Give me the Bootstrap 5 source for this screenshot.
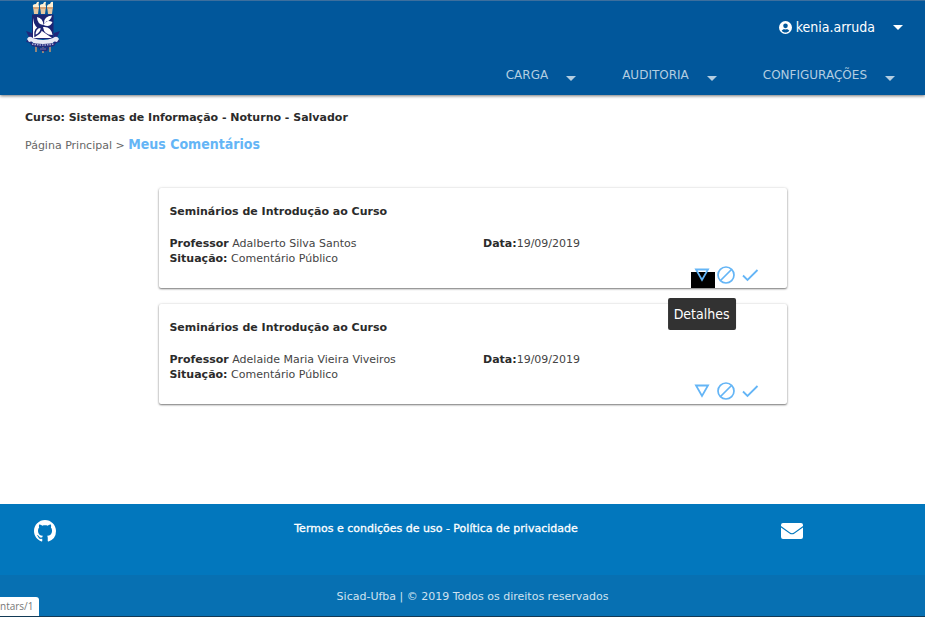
<!DOCTYPE html>
<html lang="pt-BR">
<head>
<meta charset="utf-8">
<meta name="viewport" content="width=device-width, initial-scale=1">
<title>Meus Comentários</title>
<link href="https://cdn.jsdelivr.net/npm/bootstrap@5.3.0/dist/css/bootstrap.min.css" rel="stylesheet">
<style>
body { font-family: "DejaVu Sans", sans-serif; font-size: 11px; line-height: 15px; color: #444; background: #fff; }
strong, h1, h2 { color: #2b2b2b; }
a { text-decoration: none; }
button { border: 0; background: none; padding: 0; }
.site-header { background: #01579b; border-top: 1px solid #3d6f9e; box-shadow: 0 1px 3px rgba(0,0,0,.55); }
.crest { width: 36px; height: 52px; margin-left: 25px; }
.user-menu { margin-right: 22px; font-family: "DejaVu Sans Condensed", "DejaVu Sans", sans-serif; font-size: 14px; line-height: 20px; color: #fff; }
.user-menu svg { margin-right: 4px; }
.main-menu { gap: 46px; padding: 13px 30px 11px 0; }
.main-menu button { font-size: 12px; line-height: 18px; color: #b3cde1; }
.menu-arrow { margin-left: 18px; border: 5px solid transparent; border-top-color: currentColor; border-bottom: 0; }
.main-menu .menu-arrow { margin-top: 6px; }
.page-body { padding: 13px 4px 32px 25px; }
.course-name { font-size: 11px; line-height: 20px; font-weight: 700; margin-bottom: 6px; }
.trail { line-height: 20px; margin-bottom: 32px; color: #666; }
.trail a { color: #666; }
.trail .here { font-family: "DejaVu Sans Condensed", "DejaVu Sans", sans-serif; font-size: 14px; font-weight: 700; color: #64b5f6; }
.comments { width: 70%; gap: 16px; }
.comment { padding: 14px 0 4px; border-radius: 2px; background: #fff; box-shadow: 0 1px 2px rgba(0,0,0,.5), 0 0 3px rgba(0,0,0,.12); }
.comment .row { --bs-gutter-x: 20px; margin: 0; }
.comment h2 { font-size: 11px; line-height: 20px; font-weight: 700; margin: 0 10px 14px; }
.actions { padding-right: 25px; }
.actions button { width: 24px; height: 18px; color: #64b5f6; }
.actions svg { position: relative; display: block; margin: 0 auto; }
.hover-block { position: absolute; left: 1px; top: 6px; width: 24px; height: 16px; background: #000; }
.tip { position: absolute; z-index: 2; top: 32px; left: 50%; transform: translateX(-50%); padding: 6px; border-radius: 2px; background: #323232; color: #fff; font-family: "DejaVu Sans Condensed", "DejaVu Sans", sans-serif; font-size: 14px; line-height: 20px; }
.site-footer { background: #0277bd; color: #fff; border-bottom: 1px solid #123a56; }
.footer-links { padding: 16px 122px 33px 34px; }
.footer-links a { color: #fff; }
.terms { padding-left: 35px; line-height: 18px; -webkit-text-stroke: .3px #fff; }
.legal { background: #0770b2; padding: 12px 0 9px 20px; line-height: 20px; color: #cfe2f0; }
.link-status { position: absolute; left: 0; bottom: 0; padding: 0 5px 0 0; line-height: 19px; background: #fff; color: #777; border-top-right-radius: 3px; font-family: "Open Sans", sans-serif; font-size: 10px; }
</style>
</head>
<body class="d-flex flex-column min-vh-100">
<header class="site-header position-relative">
  <div class="d-flex justify-content-between align-items-center">
    <a href="#" aria-label="UFBA">
      <svg class="crest d-block" viewBox="0 0 36 52">
        <path d="M11 44V51M18 44V52M25 44V51" stroke="#a58b78" stroke-width="1.800"/>
        <g fill="#e5c6a0"><path d="M8 5h6l-1 8H9zM15 5h6l-1 8h-4zM22 5h6l-1 8h-4z"/></g>
        <g fill="#fff0d3"><path d="M8 6Q7 3 11 3Q12 0 14 1Q13 3 14 6zM15 6Q14 3 18 3Q19 0 21 1Q20 3 21 6zM22 6Q22 3 25 3Q26 0 28 1Q28 3 28 6z"/></g>
        <path d="M8 7h6M15 7h6M22 7h6" stroke="#d39a6c" stroke-width="1.500"/>
        <path d="M1 30L7 32V42L1 41L4 36ZM35 30L29 32V42L35 41L32 36Z" fill="#20277b"/>
        <path d="M7 13.500H28.500V38H7Z" fill="#1d2472"/>
        <path d="M12 16Q18 17 18.500 24Q12 23 12 16ZM27.500 21Q21 18 18.500 24Q25 27 27.500 21ZM8 17Q9 27 17 30L27 37H8ZM19 22Q19 15 27 14.500Q26 20 19 22ZM18 26Q26 25 27.500 34Q19 34 18 26Z" fill="#fff"/>
        <path d="M10 35Q9 27 16 26Q18 31 10 35Z" fill="#fff" stroke="#1d2472" stroke-width="1.500"/>
        <path d="M2 38Q4 34 8 37Q18 41 28 37Q32 34 34 38L32 41Q28 39 27 44Q18 47 9 44Q8 39 4 41Z" fill="#e8e9f5"/>
        <path d="M4 41Q18 45 32 41L29 45Q18 48 7 45Z" fill="#252b7b"/>
        <path d="M7 43Q18 45 29 43" fill="none" stroke="#a9acd6" stroke-width="1.500" stroke-dasharray="1.500 1"/>
        <path d="M13 46Q18 48 24 46L22 50Q18 51 15 49Z" fill="#252b7b"/>
        <path d="M15.500 48h6" stroke="#bfc1dd" stroke-dasharray="1 1"/>
      </svg>
    </a>
    <button type="button" class="user-menu d-flex align-items-center">
      <svg width="13" height="13" viewBox="0 0 496 496" fill="currentColor" aria-hidden="true"><path fill-rule="evenodd" d="M248 0a248 248 0 1 0 0 496a248 248 0 1 0 0-496zm0 96a88 88 0 1 1 0 176a88 88 0 1 1 0-176zm0 344c-59 0-111-27-146-68c19-35 56-60 99-60c10 0 21 8 47 8s37-8 47-8c43 0 80 25 99 60c-35 41-87 68-146 68z"/></svg>
      <span>kenia.arruda</span><span class="menu-arrow"></span>
    </button>
  </div>
  <nav class="main-menu d-flex justify-content-end">
    <button type="button" class="d-flex align-items-center">CARGA<span class="menu-arrow"></span></button>
    <button type="button" class="d-flex align-items-center">AUDITORIA<span class="menu-arrow"></span></button>
    <button type="button" class="d-flex align-items-center">CONFIGURAÇÕES<span class="menu-arrow"></span></button>
  </nav>
</header>

<main class="page-body flex-grow-1">
  <h1 class="course-name">Curso: Sistemas de Informação - Noturno - Salvador</h1>
  <nav class="trail"><a href="#">Página Principal</a> &gt; <a href="#" class="here">Meus Comentários</a></nav>
  <div class="comments d-flex flex-column mx-auto">
    <article class="comment">
      <h2>Seminários de Introdução ao Curso</h2>
      <div class="row">
        <div class="col-6"><strong>Professor</strong> Adalberto Silva Santos<br><strong>Situação:</strong> Comentário Público</div>
        <div class="col-6"><strong>Data:</strong>19/09/2019</div>
      </div>
      <div class="actions d-flex justify-content-end">
        <button type="button" class="position-relative" aria-label="Detalhes">
          <span class="hover-block"></span>
          <svg width="18" height="18" viewBox="0 0 18 18" fill="none" stroke="currentColor" stroke-width="1.800"><path d="M3 3.500H15L9 14Z"/></svg>
          <span class="tip" role="tooltip">Detalhes</span>
        </button>
        <button type="button" aria-label="Bloquear"><svg width="18" height="18" viewBox="0 0 18 18" fill="none" stroke="currentColor" stroke-width="1.700"><circle cx="9" cy="9" r="8"/><path d="M3.500 14.500L14.500 3.500"/></svg></button>
        <button type="button" aria-label="Aprovar"><svg width="18" height="18" viewBox="0 0 18 18" fill="none" stroke="currentColor" stroke-width="1.800"><path d="M2 9.500L6.500 14L16.500 4"/></svg></button>
      </div>
    </article>
    <article class="comment">
      <h2>Seminários de Introdução ao Curso</h2>
      <div class="row">
        <div class="col-6"><strong>Professor</strong> Adelaide Maria Vieira Viveiros<br><strong>Situação:</strong> Comentário Público</div>
        <div class="col-6"><strong>Data:</strong>19/09/2019</div>
      </div>
      <div class="actions d-flex justify-content-end">
        <button type="button" aria-label="Detalhes"><svg width="18" height="18" viewBox="0 0 18 18" fill="none" stroke="currentColor" stroke-width="1.800"><path d="M3 3.500H15L9 14Z"/></svg></button>
        <button type="button" aria-label="Bloquear"><svg width="18" height="18" viewBox="0 0 18 18" fill="none" stroke="currentColor" stroke-width="1.700"><circle cx="9" cy="9" r="8"/><path d="M3.500 14.500L14.500 3.500"/></svg></button>
        <button type="button" aria-label="Aprovar"><svg width="18" height="18" viewBox="0 0 18 18" fill="none" stroke="currentColor" stroke-width="1.800"><path d="M2 9.500L6.500 14L16.500 4"/></svg></button>
      </div>
    </article>
  </div>
</main>

<footer class="site-footer position-relative">
  <div class="footer-links d-flex justify-content-between align-items-start">
    <a href="#" aria-label="GitHub"><svg class="d-block" width="22" height="22" viewBox="0 0 16 16" fill="currentColor"><path d="M8 0C3.580 0 0 3.580 0 8c0 3.540 2.290 6.530 5.470 7.590.4.070.55-.17.55-.38 0-.19-.01-.82-.01-1.490-2.010.37-2.530-.49-2.690-.94-.09-.23-.48-.94-.82-1.130-.28-.15-.68-.52-.01-.53.63-.01 1.080.58 1.230.82.72 1.210 1.870.87 2.330.66.07-.52.28-.87.51-1.070-1.780-.2-3.640-.89-3.640-3.950 0-.87.31-1.590.82-2.150-.08-.2-.36-1.020.08-2.120 0 0 .67-.21 2.200.82.64-.18 1.320-.27 2-.27s1.360.09 2 .27c1.530-1.040 2.200-.82 2.200-.82.44 1.100.16 1.920.08 2.120.51.56.82 1.270.82 2.150 0 3.070-1.870 3.750-3.650 3.950.29.25.54.73.54 1.480 0 1.070-.01 1.930-.01 2.200 0 .21.15.46.55.38A8.010 8.010 0 0 0 16 8c0-4.420-3.580-8-8-8z"/></svg></a>
    <div class="terms"><a href="#">Termos e condições de uso</a> - <a href="#">Política de privacidade</a></div>
    <a href="#" aria-label="E-mail"><svg class="d-block" width="22" height="22" viewBox="0 0 22 22" fill="currentColor"><path d="M2 3H20Q22 3 22 5V6L13 12.500Q11 14 9 12.500L0 6V5Q0 3 2 3ZM0 7.500L8.500 13.500Q11 15.200 13.500 13.500L22 7.500V17Q22 19 20 19H2Q0 19 0 17Z"/></svg></a>
  </div>
  <div class="legal text-center">Sicad-Ufba | © 2019 Todos os direitos reservados</div>
  <div class="link-status">ntars/1</div>
</footer>
<script src="https://cdn.jsdelivr.net/npm/bootstrap@5.3.0/dist/js/bootstrap.bundle.min.js"></script>
</body>
</html>
